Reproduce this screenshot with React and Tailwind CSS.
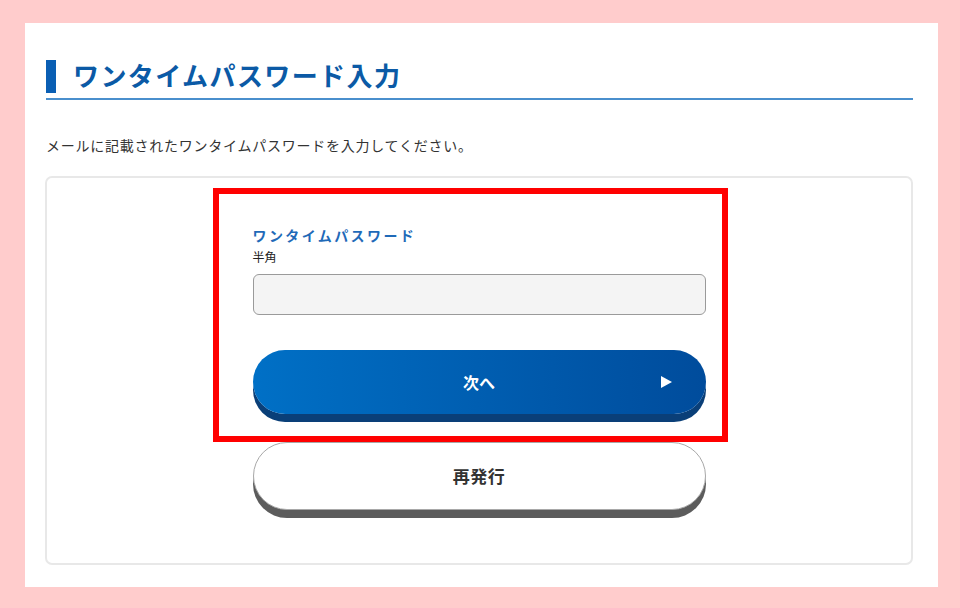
const jp = { fontFamily: '"Noto Sans CJK JP", "Noto Sans", sans-serif' };

function NextButton() {
  return (
    <button
      type="button"
      className="relative flex h-[64px] w-full items-center justify-center rounded-full bg-gradient-to-r from-[#0070c6] to-[#004c9c] text-[16px] font-bold text-white shadow-[0_8px_0_#0a3f78]"
    >
      次へ
      <svg
        className="absolute right-[34px] top-1/2 -translate-y-1/2"
        width="11"
        height="12"
        viewBox="0 0 11 12"
        aria-hidden="true"
      >
        <polygon points="0,0 11,6 0,12" fill="#ffffff" />
      </svg>
    </button>
  );
}

function ReissueButton() {
  return (
    <button
      type="button"
      className="flex h-[68px] w-full items-center justify-center rounded-full border border-[#a8a8a8] bg-white text-[17px] font-bold tracking-[0.5px] text-[#333333] shadow-[0_8px_0_#5c5c5c]"
    >
      再発行
    </button>
  );
}

export default function App() {
  return (
    <div className="h-[608px] w-[960px] bg-[#ffcccc] pl-[25px] pt-[23px]" style={jp}>
      <div className="h-[564px] w-[913px] bg-white pl-[20px] pr-[25px] pt-[37px]">
        <div className="ml-[1px]">
          <div className="flex h-[33px] items-center gap-[17px]">
            <span className="h-[33px] w-[10px] bg-[#0a5fb4]" />
            <h1 className="-mt-[4px] text-[26px] font-bold leading-none tracking-[1.4px] text-[#0b5aa6]">
              ワンタイムパスワード入力
            </h1>
          </div>
          <div className="mt-[5px] h-[2px] bg-[#4a8fcd]" />
        </div>

        <p className="mt-[35px] ml-[1px] text-[14px] leading-[20px] tracking-[0.75px] text-[#333333]">
          メールに記載されたワンタイムパスワードを入力してください。
        </p>

        <div className="relative mt-[21px] rounded-[7px] border-2 border-[#e8e8e8] pb-[53px] pt-[47px]">
          <div className="mx-auto w-[453px]">
            <div className="text-[14px] font-bold leading-[20px] tracking-[2.4px] text-[#1f6ab8]">
              ワンタイムパスワード
            </div>
            <div className="mt-[4px] text-[12px] leading-[16px] text-[#222222]">半角</div>
            <input
              type="text"
              className="mt-[9px] block h-[41px] w-full rounded-[6px] border border-[#9a9a9a] bg-[#f4f4f4] px-3 text-[14px] outline-none"
            />
            <div className="mt-[35px]">
              <NextButton />
            </div>
            <div className="mt-[28px]">
              <ReissueButton />
            </div>
          </div>

          <div className="pointer-events-none absolute left-[166px] top-[10px] h-[254px] w-[515px] border-[6px] border-[#ff0000]" />
        </div>
      </div>
    </div>
  );
}
